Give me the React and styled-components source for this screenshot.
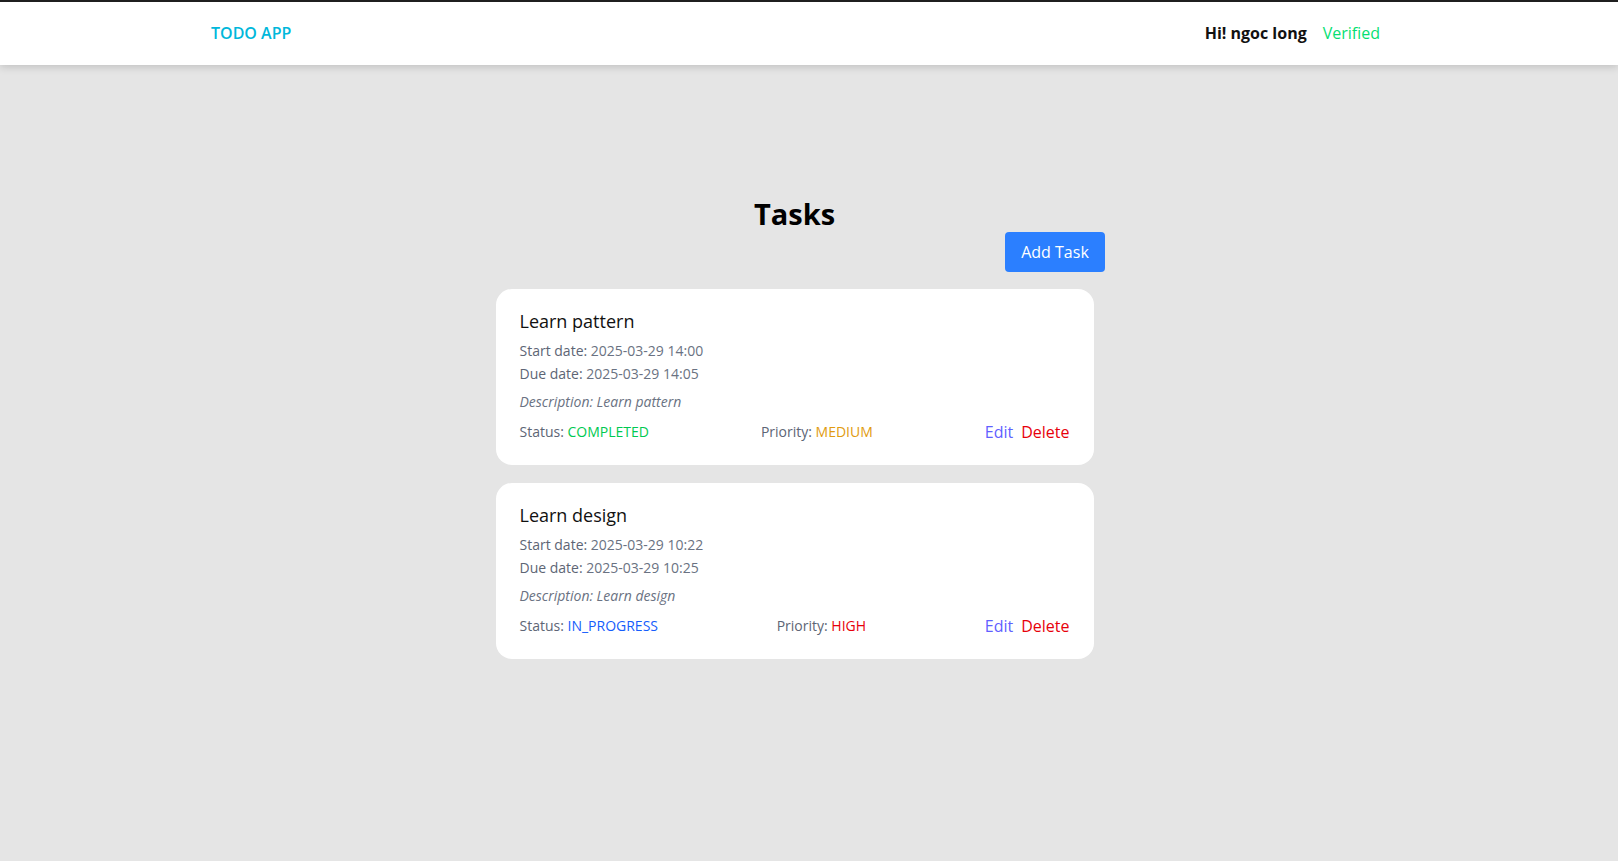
import styled, { createGlobalStyle } from "styled-components";

const GlobalStyle = createGlobalStyle`
  * {
    box-sizing: border-box;
  }
  body {
    margin: 0;
    background-color: #e5e5e5;
    border-top: 2px solid #1f1f1f;
    font-family: "Open Sans", "Noto Sans", sans-serif;
    color: #111;
    min-height: 100vh;
  }
`;

const Header = styled.header`
  height: 63px;
  background-color: #fff;
  box-shadow: 0 2px 8px rgba(0, 0, 0, 0.16);
  display: flex;
  align-items: center;
  justify-content: space-between;
  padding: 0 238px 2px 211px;
`;

const Logo = styled.div`
  color: #00b8db;
  font-size: 16px;
  font-weight: 600;
`;

const User = styled.div`
  display: flex;
  align-items: center;
  gap: 16px;
  font-size: 16px;
`;

const Greeting = styled.span`
  font-weight: 700;
  color: #111;
`;

const Verified = styled.span`
  color: #05df72;
`;

const Main = styled.main`
  display: flex;
  justify-content: center;
  padding: 130px 29px 0 0;
`;

const Column = styled.div`
  width: 621px;
  display: flex;
  flex-direction: column;
`;

const Title = styled.h1`
  margin: 0;
  text-align: center;
  font-size: 29px;
  line-height: 37px;
  font-weight: 700;
  color: #000;
`;

const Toolbar = styled.div`
  display: flex;
  justify-content: flex-end;
  margin-bottom: 17px;
`;

const AddButton = styled.button`
  width: 100px;
  height: 40px;
  border: none;
  border-radius: 4px;
  background-color: #2b7fff;
  color: #fff;
  font-family: inherit;
  font-size: 16px;
  font-weight: 500;
  cursor: pointer;
`;

const List = styled.div`
  display: flex;
  flex-direction: column;
  gap: 18px;
  width: 598px;
  margin: 0 auto;
`;

const Card = styled.div`
  background-color: #fff;
  border-radius: 16px;
  padding: 20px 24px 21px;
`;

const TaskName = styled.h2`
  margin: 0 0 6px;
  font-size: 18px;
  line-height: 24px;
  font-weight: 400;
  color: #111;
`;

const Meta = styled.div`
  font-size: 14px;
  line-height: 23px;
  color: #6a7282;
`;

const Label = styled.span`
  font-weight: 500;
  color: #5d6575;
`;

const Description = styled.div`
  margin-top: 7px;
  font-size: 14px;
  line-height: 20px;
  font-style: italic;
  color: #6a7282;
`;

const Footer = styled.div`
  margin-top: 8px;
  display: flex;
  align-items: center;
  justify-content: space-between;
  font-size: 14px;
  line-height: 24px;
  color: #6a7282;
`;

const Value = styled.span`
  color: ${(p) => p.color};
`;

const Actions = styled.div`
  display: flex;
  gap: 8px;
`;

const Action = styled.button`
  border: none;
  background: none;
  padding: 0;
  font-family: inherit;
  font-size: 16px;
  color: ${(p) => p.color};
  cursor: pointer;
`;

const statusColors = {
  COMPLETED: "#00c951",
  IN_PROGRESS: "#155dfc",
};

const priorityColors = {
  MEDIUM: "#e19b0f",
  HIGH: "#e7000b",
};

const tasks = [
  {
    id: 1,
    title: "Learn pattern",
    start: "2025-03-29 14:00",
    due: "2025-03-29 14:05",
    description: "Learn pattern",
    status: "COMPLETED",
    priority: "MEDIUM",
  },
  {
    id: 2,
    title: "Learn design",
    start: "2025-03-29 10:22",
    due: "2025-03-29 10:25",
    description: "Learn design",
    status: "IN_PROGRESS",
    priority: "HIGH",
  },
];

const TaskCard = ({ task }) => (
  <Card>
    <TaskName>{task.title}</TaskName>
    <Meta>
      <Label>Start date:</Label> {task.start}
    </Meta>
    <Meta>
      <Label>Due date:</Label> {task.due}
    </Meta>
    <Description>Description: {task.description}</Description>
    <Footer>
      <span>
        <Label>Status:</Label>{" "}
        <Value color={statusColors[task.status]}>{task.status}</Value>
      </span>
      <span>
        <Label>Priority:</Label>{" "}
        <Value color={priorityColors[task.priority]}>{task.priority}</Value>
      </span>
      <Actions>
        <Action color="#615fff">Edit</Action>
        <Action color="#e7000b">Delete</Action>
      </Actions>
    </Footer>
  </Card>
);

const App = () => {
  return (
    <>
      <GlobalStyle />
      <Header>
        <Logo>TODO APP</Logo>
        <User>
          <Greeting>Hi! ngoc long</Greeting>
          <Verified>Verified</Verified>
        </User>
      </Header>
      <Main>
        <Column>
          <Title>Tasks</Title>
          <Toolbar>
            <AddButton>Add Task</AddButton>
          </Toolbar>
          <List>
            {tasks.map((t) => (
              <TaskCard key={t.id} task={t} />
            ))}
          </List>
        </Column>
      </Main>
    </>
  );
};

export default App;
